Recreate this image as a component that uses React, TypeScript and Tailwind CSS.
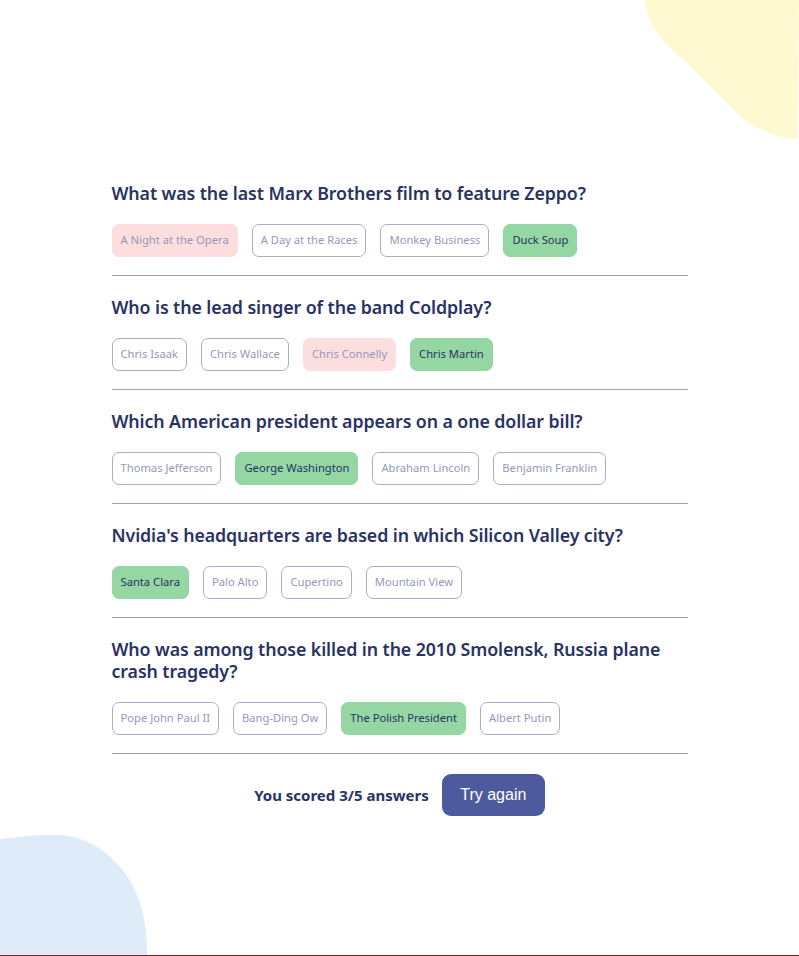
import React from 'react';

type Question = {
  question: string;
  answers: string[];
  correct: string;
  picked: string;
};

const questions: Question[] = [
  {
    question: 'What was the last Marx Brothers film to feature Zeppo?',
    answers: ['A Night at the Opera', 'A Day at the Races', 'Monkey Business', 'Duck Soup'],
    correct: 'Duck Soup',
    picked: 'A Night at the Opera',
  },
  {
    question: 'Who is the lead singer of the band Coldplay?',
    answers: ['Chris Isaak', 'Chris Wallace', 'Chris Connelly', 'Chris Martin'],
    correct: 'Chris Martin',
    picked: 'Chris Connelly',
  },
  {
    question: 'Which American president appears on a one dollar bill?',
    answers: ['Thomas Jefferson', 'George Washington', 'Abraham Lincoln', 'Benjamin Franklin'],
    correct: 'George Washington',
    picked: 'George Washington',
  },
  {
    question: "Nvidia's headquarters are based in which Silicon Valley city?",
    answers: ['Santa Clara', 'Palo Alto', 'Cupertino', 'Mountain View'],
    correct: 'Santa Clara',
    picked: 'Santa Clara',
  },
  {
    question: 'Who was among those killed in the 2010 Smolensk, Russia plane crash tragedy?',
    answers: ['Pope John Paul II', 'Bang-Ding Ow', 'The Polish President', 'Albert Putin'],
    correct: 'The Polish President',
    picked: 'The Polish President',
  },
];

function Answer({ text, correct, picked }: { text: string; correct: boolean; picked: boolean }) {
  let cls = 'border border-[#a6add0] text-[#9499ba]';
  if (correct) cls = 'border border-[#94d7a2] bg-[#94d7a2] text-[#293264]';
  else if (picked) cls = 'border border-[#fcdede] bg-[#fcdede] text-[#9499ba]';
  return (
    <div className={`h-[33px] px-[8px] rounded-[7px] flex items-center text-[11.2px] whitespace-nowrap ${cls}`}>
      {text}
    </div>
  );
}

export default function App() {
  const score = questions.filter((q) => q.picked === q.correct).length;

  return (
    <div className="relative h-[956px] overflow-hidden bg-white border-b border-[#8f1d1d] font-['Noto_Sans',sans-serif]">
      <svg className="absolute right-0 top-0" width="155" height="140" viewBox="645 0 155 140" aria-hidden>
        <path
          d="M645 0 C648 20 660 40 685 60 L727 102 C745 122 765 137 799 139 L800 0 Z"
          fill="#fff9d2"
        />
      </svg>
      <svg className="absolute left-0 bottom-0" width="150" height="120" viewBox="0 837 150 120" aria-hidden>
        <path
          d="M0 841 C25 838 45 836 60 837 C85 839 105 850 125 875 C142 900 147 925 147 957 L0 957 Z"
          fill="#deebf8"
        />
      </svg>

      <main className="relative max-w-[576px] mx-auto pt-[182px]">
        {questions.map((q) => (
          <section key={q.question} className="border-b border-[#a3a3a3] pb-[18px] mb-[20px]">
            <h2 className="text-[17.8px] leading-[22px] font-semibold text-[#293264] tracking-[-0.1px]">
              {q.question}
            </h2>
            <div className="flex gap-[14px] mt-[20px]">
              {q.answers.map((a) => (
                <Answer key={a} text={a} correct={a === q.correct} picked={a === q.picked} />
              ))}
            </div>
          </section>
        ))}

        <div className="flex items-center justify-center gap-[13px]">
          <span className="text-[15px] font-bold text-[#293264]">You scored {score}/5 answers</span>
          <button
            type="button"
            className="w-[103px] h-[42px] rounded-[9px] bg-[#4d5b9e] text-white text-[16px] font-['Liberation_Sans',sans-serif]"
          >
            Try again
          </button>
        </div>
      </main>
    </div>
  );
}
